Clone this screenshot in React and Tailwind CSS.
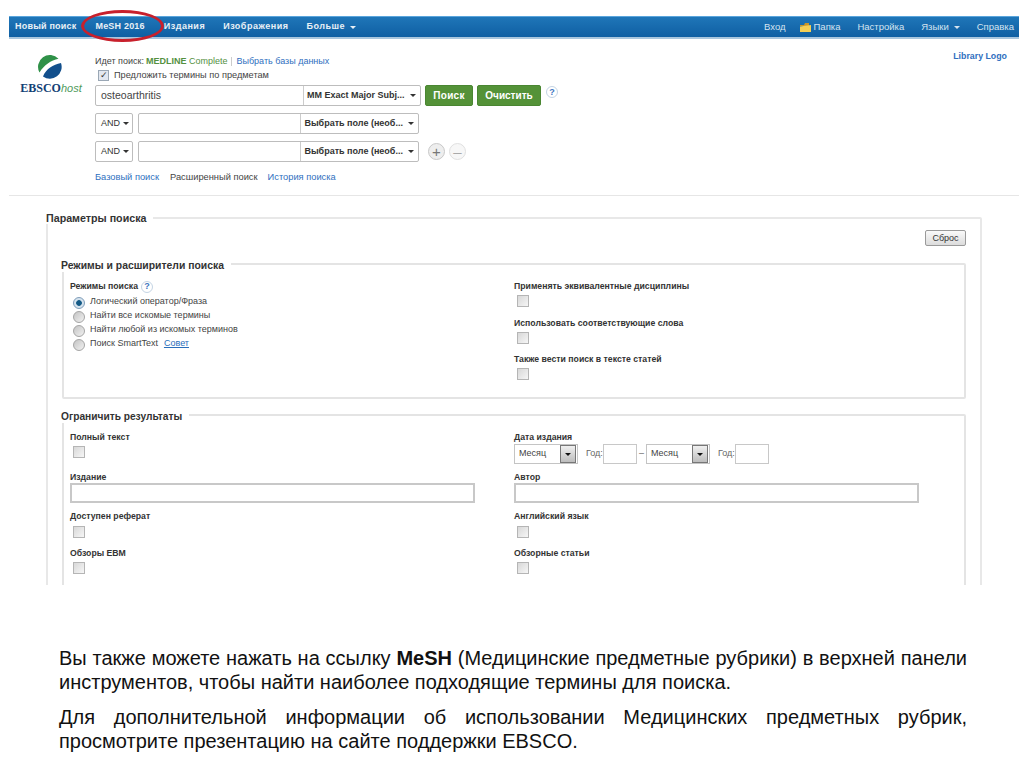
import React from "react";

const Caret = ({ cls = "border-t-[#333]" }) => (
  <span className={`inline-block w-0 h-0 border-x-[3px] border-x-transparent border-t-[3px] ${cls}`} />
);

const Check = ({ className = "" }) => (
  <span className={`block w-[12px] h-[12px] border border-[#b5b5b5] bg-gradient-to-br from-[#d8d8d8] to-[#f6f6f6] ${className}`} />
);

const Help = ({ className = "" }) => (
  <span className={`flex items-center justify-center w-[12px] h-[12px] rounded-full border border-[#c4d4e4] bg-white text-[#3f76c0] text-[9px] font-bold leading-none ${className}`}>?</span>
);

const Radio = ({ on, label, extra }) => (
  <div className="flex items-center h-[14px] text-[9px] text-[#444]">
    <span className={`block w-[12px] h-[12px] ml-[3px] mt-[1px] rounded-full border ${on ? "border-[#7f9db9] bg-[radial-gradient(circle,#145a86_35%,#d5e3ee_45%)]" : "border-[#a5a5a5] bg-gradient-to-br from-[#c4c4c4] to-[#f2f2f2]"}`} />
    <span className="ml-[5px]">{label}</span>
    {extra && <span className="ml-[6px] text-[#2a6ebb] underline">{extra}</span>}
  </div>
);

const Field = ({ children, className = "" }) => (
  <div className={`text-[8.7px] font-bold text-[#333] leading-[11px] ${className}`}>{children}</div>
);

const SearchSelect = ({ label, w }) => (
  <div className={`flex items-center justify-between h-full ${w} pl-[3px] pr-[4px] text-[9px] font-bold text-[#333] border-l border-[#ccc] whitespace-nowrap`}>
    <span>{label}</span>
    <Caret />
  </div>
);

const AndRow = ({ mb = "" }) => (
  <div className={`flex h-[21px] ${mb}`}>
    <div className="flex items-center w-[38px] pl-[5px] gap-[3px] border border-[#bdbdbd] rounded-[2px] text-[9px] text-[#333]">
      AND <Caret />
    </div>
    <div className="flex ml-[5px] w-[281px] border border-[#bdbdbd] rounded-[2px]">
      <div className="w-[162px]" />
      <SearchSelect label="Выбрать поле (необ..." w="w-[118px]" />
    </div>
  </div>
);

const MonthSelect = () => (
  <div className="flex items-center justify-between w-[64px] h-[20px] pl-[4px] pr-[1px] border border-[#c4c4c4] text-[9px] text-[#444]">
    <span>Месяц</span>
    <span className="flex items-center justify-center w-[16px] h-[18px] border border-[#777] bg-gradient-to-b from-[#f0f0f0] to-[#bdbdbd]">
      <Caret cls="border-t-[#111]" />
    </span>
  </div>
);

const Logo = () => (
  <div className="w-[62px] flex flex-col items-center">
    <svg width="24" height="24" viewBox="0 0 24 24" className="-ml-[2px]">
      <path d="M1.500 17.500A11.800 11.800 0 0 1 20.500 3.800C13 5.500 6 10 1.500 17.500Z" fill="#2f9148" />
      <path d="M5 21.500A11.800 11.800 0 0 0 23 8C15 9.500 8 14 5 21.500Z" fill="#124f8c" />
    </svg>
    <div className="mt-[3px] leading-[12px] whitespace-nowrap text-[12px]">
      <span className="font-bold text-[#123f75] font-['Liberation_Serif',serif]">EBSCO</span>
      <span className="italic text-[#4f9a5b] text-[11px]">host</span>
    </div>
  </div>
);

const Legend = ({ children, className = "" }) => (
  <legend className={`pr-[7px] font-bold text-[#333] leading-[12px] ${className}`}>{children}</legend>
);

export default function App() {
  return (
    <div className="relative w-[1024px] h-[767px] overflow-hidden bg-white font-['Liberation_Sans',Arial,sans-serif]">
      <div className="pt-[16px] pl-[9px] pr-[5px]">
        <nav className="flex items-center justify-between h-[23px] bg-gradient-to-b from-[#1f76b8] to-[#0f5fa3] border-t border-t-[#5aa5dc] border-b-2 border-b-[#a9c6de] text-[9px] font-bold text-[#e8f0f6]">
          <div className="flex items-center pl-[6px] tracking-[0.2px]">
            <span>Новый поиск</span>
            <span className="ml-[19px]">MeSH 2016</span>
            <span className="ml-[19px] tracking-[0.5px]">Издания</span>
            <span className="ml-[18px] tracking-[0.5px]">Изображения</span>
            <span className="ml-[18px] tracking-[0.5px] flex items-center gap-[5px]">Больше <Caret cls="border-t-[#e8f0f6]" /></span>
          </div>
          <div className="flex items-center pr-[5px] font-normal text-[9.500px] text-[#d5e4f0]">
            <span>Вход</span>
            <span className="ml-[14px] flex items-center gap-[3px]">
              <svg width="11" height="9" viewBox="0 0 11 9">
                <path d="M0 2h4l1-2h4v3H0Z" fill="#c9962a" />
                <path d="M0 9V3.500L11 2v7Z" fill="#f4cf55" />
              </svg>
              Папка
            </span>
            <span className="ml-[17px]">Настройка</span>
            <span className="ml-[17px] flex items-center gap-[5px]">Языки <Caret cls="border-t-[#d5e4f0]" /></span>
            <span className="ml-[17px]">Справка</span>
          </div>
        </nav>

        <div className="flex justify-between h-[157px] border-b border-[#e6e6e6]">
          <div className="flex">
            <div className="pt-[16px] pl-[11px] w-[86px]"><Logo /></div>
            <div className="pt-[17px]">
              <div className="flex items-center h-[11px] text-[9px] text-[#444]">
                Идет поиск:
                <span className="ml-[2px] text-[#54903f]"><b>MEDLINE</b> Complete</span>
                <span className="mx-[4px] h-[9px] border-l border-[#ccc]" />
                <span className="text-[#2f6fc0]">Выбрать базы данных</span>
              </div>
              <div className="flex items-center h-[13px] mt-[2px] text-[9.200px] text-[#444]">
                <span className="flex items-center justify-center ml-[3px] w-[11px] h-[11px] border border-[#9aa7b5] bg-[#e2e7ef] text-[#333] text-[9px] leading-none">✓</span>
                <span className="ml-[5px]">Предложить термины по предметам</span>
              </div>
              <div className="flex h-[21px] mt-[3px] mb-[7px]">
                <div className="flex w-[326px] shrink-0 border border-[#bdbdbd] rounded-[2px]">
                  <div className="w-[207px] pl-[5px] pt-[1px] flex items-center text-[10.500px] text-[#444]">osteoarthritis</div>
                  <SearchSelect label="MM Exact Major Subj..." w="w-[117px]" />
                </div>
                <button className="ml-[4px] w-[48px] shrink-0 rounded-[2px] bg-[#549238] border border-[#4a8632] text-[10px] tracking-[0.3px] font-bold text-white">Поиск</button>
                <button className="ml-[4px] w-[64px] shrink-0 rounded-[2px] bg-[#549238] border border-[#4a8632] text-[10px] font-bold text-white">Очистить</button>
                <Help className="ml-[5px] mt-[1px] shrink-0" />
              </div>
              <AndRow mb="mb-[7px]" />
              <div className="flex items-center">
                <AndRow />
                <span className="flex items-center justify-center ml-[9px] w-[17px] h-[17px] rounded-full border border-[#c8c8c8] bg-[#eeeeee] text-[#777] text-[15px] leading-none">+</span>
                <span className="flex items-center justify-center ml-[4px] w-[17px] h-[17px] rounded-full border border-[#e0e0e0] bg-[#f7f7f7] text-[#aaa] text-[15px] leading-none">–</span>
              </div>
              <div className="flex mt-[10px] text-[9.300px] leading-[11px]">
                <span className="text-[#2f6fc0]">Базовый поиск</span>
                <span className="ml-[11px] text-[#444]">Расширенный поиск</span>
                <span className="ml-[10px] text-[#2f6fc0]">История поиска</span>
              </div>
            </div>
          </div>
          <div className="pt-[11px] pr-[12px] text-[8.800px] font-bold text-[#2f6fc0]">Library Logo</div>
        </div>
      </div>

      <div className="ml-[46px] mr-[42px] mt-[16px] h-[373px] overflow-hidden">
        <fieldset className="border-2 border-[#e8e8e8] rounded-[2px] pb-[20px] min-w-0">
          <Legend className="text-[10.700px] -ml-[2px]">Параметры поиска</Legend>
          <div className="px-[14px]">
            <div className="flex justify-end mt-[6px]">
              <button className="w-[41px] h-[16px] border border-[#9a9a9a] rounded-[2px] bg-gradient-to-b from-[#fafafa] to-[#dcdcdc] text-[9px] text-[#333] leading-none">Сброс</button>
            </div>

            <fieldset className="mt-[10px] h-[143px] border-2 border-[#e4e4e4] rounded-[2px] min-w-0">
              <Legend className="text-[10.400px] -ml-[3px] pt-[4px]">Режимы и расширители поиска</Legend>
              <div className="grid grid-cols-[444px_1fr] pl-[6px] pt-[8px]">
                <div>
                  <Field className="flex items-center gap-[3px] h-[13px]">Режимы поиска <Help /></Field>
                  <div className="mt-[2px]">
                    <Radio on label="Логический оператор/Фраза" />
                    <Radio label="Найти все искомые термины" />
                    <Radio label="Найти любой из искомых терминов" />
                    <Radio label="Поиск SmartText" extra="Совет" />
                  </div>
                </div>
                <div className="pt-[1px]">
                  <Field>Применять эквивалентные дисциплины</Field>
                  <Check className="ml-[3px] mt-[3px]" />
                  <Field className="mt-[11px]">Использовать соответствующие слова</Field>
                  <Check className="ml-[3px] mt-[3px]" />
                  <Field className="mt-[10px]">Также вести поиск в тексте статей</Field>
                  <Check className="ml-[3px] mt-[3px]" />
                </div>
              </div>
            </fieldset>

            <fieldset className="mt-[8px] h-[212px] border-2 border-[#e4e4e4] rounded-[2px] min-w-0">
              <Legend className="text-[10.200px] -ml-[3px] pt-[4px]">Ограничить результаты</Legend>
              <div className="grid grid-cols-[444px_1fr] pl-[6px] pt-[9px]">
                <div>
                  <Field>Полный текст</Field>
                  <Check className="ml-[3px] mt-[3px]" />
                  <Field className="mt-[14px]">Издание</Field>
                  <div className="w-[405px] h-[20px] border-2 border-[#c8c8c8] bg-white" />
                  <Field className="mt-[8px]">Доступен реферат</Field>
                  <Check className="ml-[3px] mt-[4px]" />
                  <Field className="mt-[10px]">Обзоры EBM</Field>
                  <Check className="ml-[3px] mt-[3px]" />
                </div>
                <div>
                  <Field>Дата издания</Field>
                  <div className="flex items-center text-[9px] text-[#666] mt-[1px]">
                    <MonthSelect />
                    <span className="ml-[8px] w-[17px]">Год:</span>
                    <span className="block w-[34px] h-[20px] border border-[#c8c8c8]" />
                    <span className="w-[9px] text-center">–</span>
                    <MonthSelect />
                    <span className="ml-[8px] w-[17px]">Год:</span>
                    <span className="block w-[34px] h-[20px] border border-[#c8c8c8]" />
                  </div>
                  <Field className="mt-[8px]">Автор</Field>
                  <div className="w-[405px] h-[20px] border-2 border-[#c8c8c8] bg-white" />
                  <Field className="mt-[8px]">Английский язык</Field>
                  <Check className="ml-[3px] mt-[4px]" />
                  <Field className="mt-[10px]">Обзорные статьи</Field>
                  <Check className="ml-[3px] mt-[3px]" />
                </div>
              </div>
            </fieldset>
          </div>
        </fieldset>
      </div>

      <div className="ml-[59px] w-[908px] mt-[62px] text-[20px] leading-[23.500px] text-[#111] text-justify">
        <p>Вы также можете нажать на ссылку <b>MeSH</b> (Медицинские предметные рубрики) в верхней панели инструментов, чтобы найти наиболее подходящие термины для поиска.</p>
        <p className="mt-[12px]">Для дополнительной информации об использовании Медицинских предметных рубрик, просмотрите презентацию на сайте поддержки EBSCO.</p>
      </div>

      <span className="absolute left-[81px] top-[10px] w-[83px] h-[32px] rounded-[50%] border-[3px] border-[#c8202c]" />
    </div>
  );
}
